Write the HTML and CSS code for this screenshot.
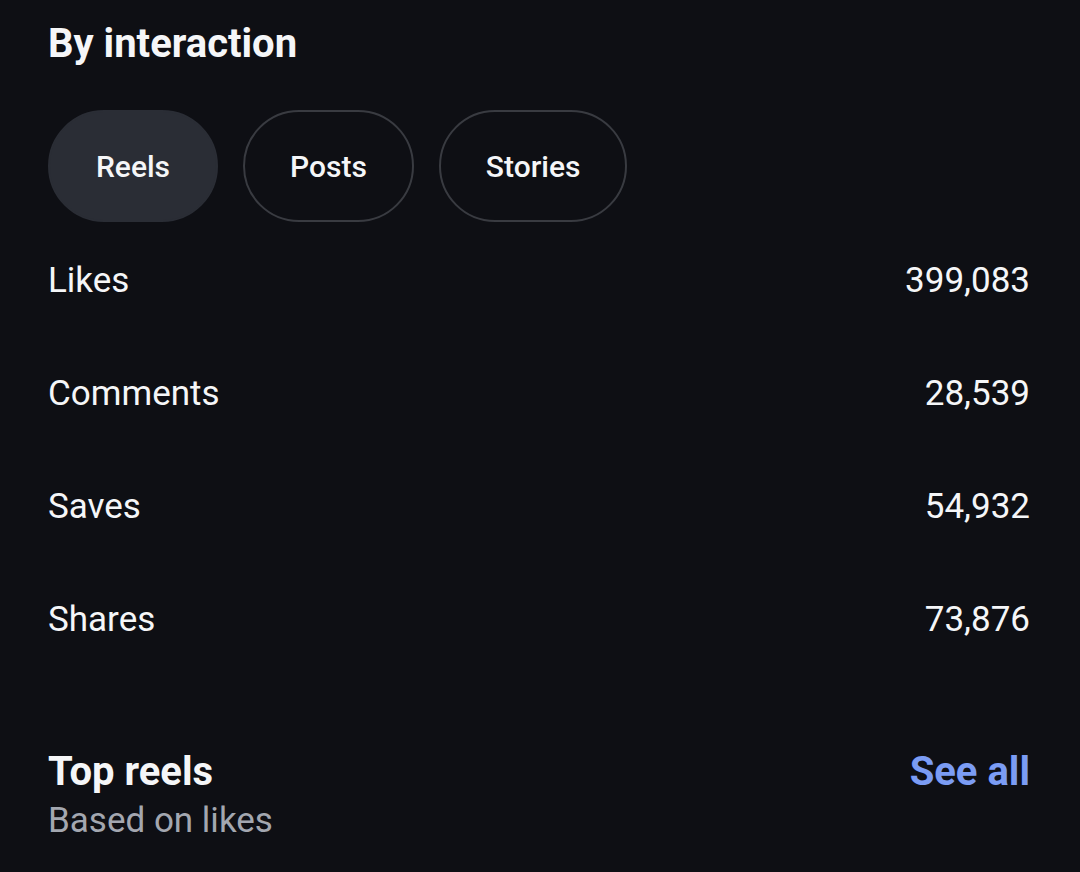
FILE: index.html
```html
<!DOCTYPE html>
<html>
<head>
<meta charset="utf-8">
<link rel="stylesheet" href="styles.css">
</head>
<body>
<div class="page">
  <h2 class="title">By interaction</h2>
  <div class="chips">
    <div class="chip active">Reels</div>
    <div class="chip">Posts</div>
    <div class="chip">Stories</div>
  </div>
  <div class="rows">
    <div class="row"><span>Likes</span><span>399,083</span></div>
    <div class="row"><span>Comments</span><span>28,539</span></div>
    <div class="row"><span>Saves</span><span>54,932</span></div>
    <div class="row"><span>Shares</span><span>73,876</span></div>
  </div>
  <div class="top">
    <div class="top-left">
      <div class="top-title">Top reels</div>
      <div class="top-sub">Based on likes</div>
    </div>
    <div class="see-all">See all</div>
  </div>
</div>
</body>
</html>
```
FILE: styles.css
```css
html, body {
  margin: 0;
  padding: 0;
  background: #0e0f14;
}
.page {
  width: 1080px;
  height: 872px;
  box-sizing: border-box;
  padding: 0 50px 0 48px;
  font-family: Roboto, "Noto Sans", sans-serif;
  color: #f5f6f8;
  overflow: hidden;
}
.title {
  margin: 0;
  padding-top: 20px;
  font-size: 40px;
  font-weight: 700;
  line-height: 48px;
}
.chips {
  display: flex;
  gap: 25px;
  margin-top: 42px;
}
.chip {
  height: 112px;
  box-sizing: border-box;
  border: 2px solid #393b41;
  border-radius: 56px;
  display: flex;
  align-items: center;
  justify-content: center;
  padding: 0 45px;
  min-width: 170px;
  font-size: 30px;
  font-weight: 500;
}
.chip.active {
  background: #2a2d35;
  border-color: #2a2d35;
}
.rows {
  margin-top: 2px;
}
.row {
  height: 113px;
  display: flex;
  justify-content: space-between;
  align-items: center;
  font-size: 35px;
}
.top {
  margin-top: 71px;
  display: flex;
  justify-content: space-between;
  align-items: flex-start;
}
.top-title {
  font-size: 40px;
  font-weight: 700;
  line-height: 50px;
}
.top-sub {
  font-size: 35px;
  color: #a3a7b0;
  line-height: 48px;
}
.see-all {
  font-size: 40px;
  font-weight: 700;
  color: #7b9cf4;
  line-height: 50px;
}
```
